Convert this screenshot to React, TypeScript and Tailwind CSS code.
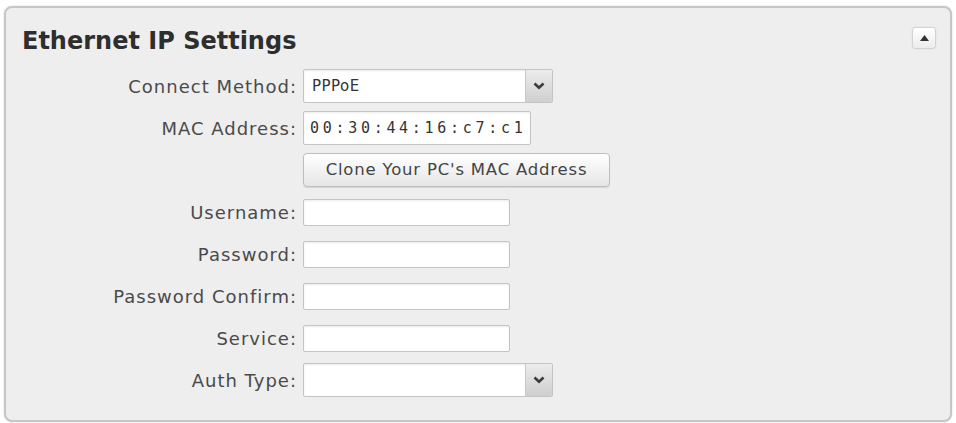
const FONT = { fontFamily: '"DejaVu Sans", "Liberation Sans", sans-serif' }

const Chevron = () => (
  <svg width="12" height="8" viewBox="0 0 12 8">
    <path d="M1.5 1.5 L6 5.8 L10.5 1.5" fill="none" stroke="#3a3a3a" strokeWidth="2.6" />
  </svg>
)

const Row = ({ label, children }: { label: string; children?: React.ReactNode }) => (
  <div className="flex h-[42px] items-center">
    <div className="w-[291px] text-right text-[18px] tracking-[1px] text-[#4a4a4a]">{label}</div>
    <div className="ml-[6px] flex items-center">{children}</div>
  </div>
)

const Select = ({ value, width }: { value?: string; width: string }) => (
  <div className={`flex h-[34px] ${width} overflow-hidden rounded-[2px] border border-[#c4c4c4] bg-white shadow-[inset_0_1px_2px_rgba(0,0,0,0.08)]`}>
    <div className="flex flex-1 items-center pl-[8px] text-[15px] tracking-[0.5px] text-[#333]">{value}</div>
    <div className="flex w-[27px] items-center justify-center border-l border-[#c8c8c8] bg-gradient-to-b from-[#ececec] to-[#cfcfcf]">
      <Chevron />
    </div>
  </div>
)

const TextInput = () => (
  <div className="h-[27px] w-[207px] rounded-[2px] border border-[#c4c4c4] bg-white shadow-[inset_0_1px_2px_rgba(0,0,0,0.08)]" />
)

export default function App() {
  return (
    <div className="min-h-[423px] w-[956px] bg-white pl-[4px] pt-[6px]" style={FONT}>
      <div className="relative h-[416px] w-[948px] rounded-[8px] border-2 border-[#c6c6c6] bg-[#eeeeee] shadow-[0_0_2px_rgba(0,0,0,0.15)]">
        <h2 className="ml-[16px] mt-[17px] h-[32px] text-[24px] font-bold leading-[32px] text-[#2e2e2e]">Ethernet IP Settings</h2>

        <button className="absolute right-[14px] top-[19px] flex h-[22px] w-[24px] items-center justify-center rounded-[3px] border border-[#d2d2d2] bg-gradient-to-b from-white to-[#ececec] shadow-[0_0_2px_rgba(0,0,0,0.08)]">
          <svg width="9" height="6" viewBox="0 0 9 6">
            <path d="M0 6 L4.5 0 L9 6 Z" fill="#333" />
          </svg>
        </button>

        <div className="mt-[8px]">
          <Row label="Connect Method:">
            <Select value="PPPoE" width="w-[250px]" />
          </Row>
          <Row label="MAC Address:">
            <div className="flex h-[34px] w-[228px] items-center rounded-[2px] border border-[#c4c4c4] bg-white pl-[6px] text-[15px] tracking-[3.7px] text-[#333] shadow-[inset_0_1px_2px_rgba(0,0,0,0.08)]" style={{ fontFamily: '"DejaVu Sans Mono", monospace' }}>
              00:30:44:16:c7:c1
            </div>
          </Row>
          <Row label="">
            <button className="h-[34px] w-[307px] rounded-[4px] border border-[#bdbdbd] bg-gradient-to-b from-white to-[#e6e6e6] text-[16.5px] tracking-[0.8px] text-[#444] shadow-[0_1px_1px_rgba(0,0,0,0.1)]">
              Clone Your PC's MAC Address
            </button>
          </Row>
          <Row label="Username:">
            <TextInput />
          </Row>
          <Row label="Password:">
            <TextInput />
          </Row>
          <Row label="Password Confirm:">
            <TextInput />
          </Row>
          <Row label="Service:">
            <TextInput />
          </Row>
          <Row label="Auth Type:">
            <Select width="w-[250px]" />
          </Row>
        </div>
      </div>
    </div>
  )
}
